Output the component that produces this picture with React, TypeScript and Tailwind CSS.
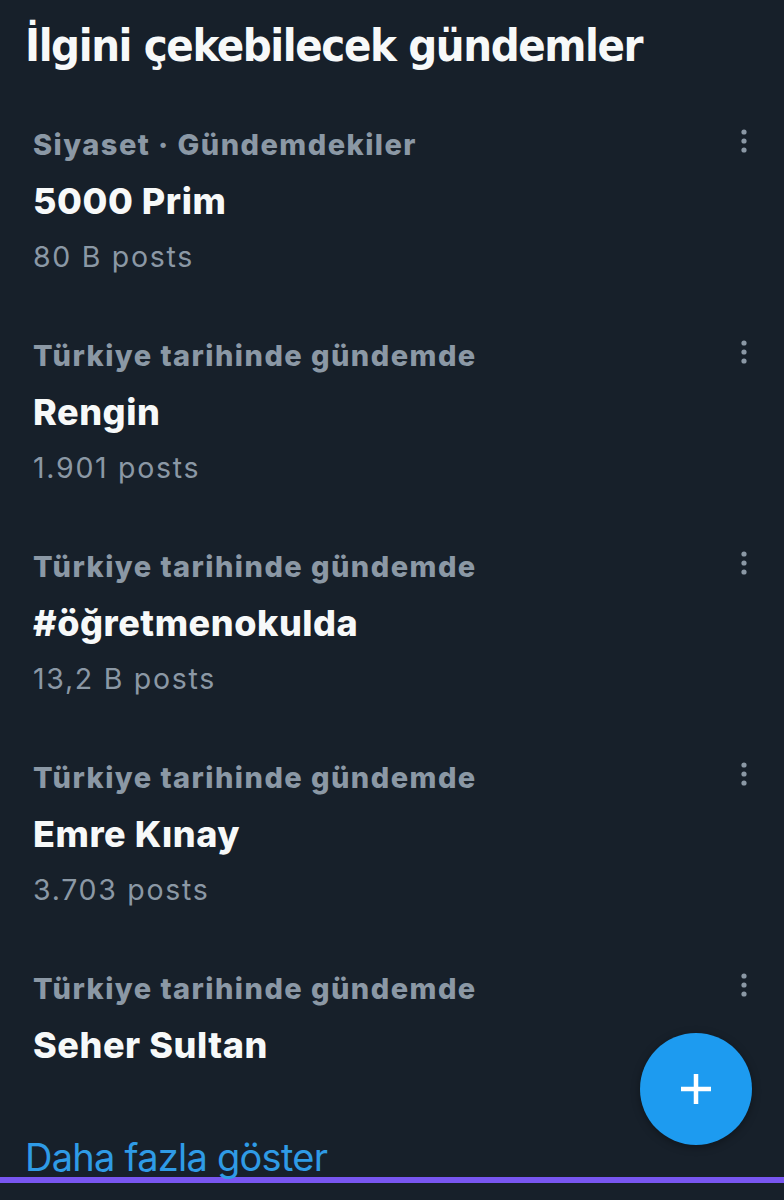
import React from "react";

type Trend = {
  category: string;
  name: string;
  posts?: string;
};

const trends: Trend[] = [
  { category: "Siyaset · Gündemdekiler", name: "5000 Prim", posts: "80 B posts" },
  { category: "Türkiye tarihinde gündemde", name: "Rengin", posts: "1.901 posts" },
  { category: "Türkiye tarihinde gündemde", name: "#öğretmenokulda", posts: "13,2 B posts" },
  { category: "Türkiye tarihinde gündemde", name: "Emre Kınay", posts: "3.703 posts" },
  { category: "Türkiye tarihinde gündemde", name: "Seher Sultan" },
];

const MoreIcon = () => (
  <svg width="10" height="30" viewBox="0 0 10 30" className="text-[#8b98a5]">
    <circle cx="5" cy="5" r="2.6" fill="currentColor" />
    <circle cx="5" cy="14" r="2.6" fill="currentColor" />
    <circle cx="5" cy="23" r="2.6" fill="currentColor" />
  </svg>
);

const TrendRow = ({ t }: { t: Trend }) => {
  return (
    <div className="flex h-[211px] pt-[21px] pl-[33px] pr-[35px]">
      <div className="flex-1 flex flex-col">
        <div className="h-[56px] flex items-center text-[29px] font-extrabold text-[#8b98a5] tracking-[1.45px]">
          {t.category}
        </div>
        <div className="h-[56px] flex items-center text-[36px] font-extrabold text-[#f7f9f9] tracking-[0.55px]">
          {t.name}
        </div>
        {t.posts && (
          <div className="h-[56px] flex items-center text-[28.5px] text-[#8b98a5] tracking-[1.7px]">
            {t.posts}
          </div>
        )}
      </div>
      <div className="pt-[10px]">
        <MoreIcon />
      </div>
    </div>
  );
};

export default function App() {
  return (
    <div
      className="relative w-[784px] h-[1200px] overflow-hidden bg-[#17202a]"
      style={{ fontFamily: "Inter, 'Noto Sans', sans-serif" }}
    >
      <div className="h-[96px] pl-[25px] pt-[18px]">
        <h1
          className="text-[45px] leading-[56px] font-bold text-[#f7f9f9] tracking-[-1.4px]"
          style={{ fontFamily: "'DejaVu Sans Condensed', 'Liberation Sans Narrow', sans-serif" }}
        >
          İlgini çekebilecek gündemler
        </h1>
      </div>

      <div className="flex flex-col">
        {trends.map((t, i) => (
          <TrendRow key={i} t={t} />
        ))}
      </div>

      <div className="-mt-[35px] pl-[25px] h-[61px] flex items-end">
        <span className="text-[38px] leading-[40px] text-[#2f9be6] tracking-[-0.75px]">
          Daha fazla göster
        </span>
      </div>
      <div className="h-[6px] bg-[#7856f0]" />

      <button className="absolute left-[640px] top-[1033px] w-[112px] h-[112px] rounded-full bg-[#1d9bf0] flex items-center justify-center shadow-[0_2px_8px_rgba(0,0,0,0.35)]">
        <svg width="34" height="34" viewBox="0 0 34 34">
          <path d="M17 2v30M2 17h30" stroke="#fff" strokeWidth="4.5" />
        </svg>
      </button>
    </div>
  );
}
